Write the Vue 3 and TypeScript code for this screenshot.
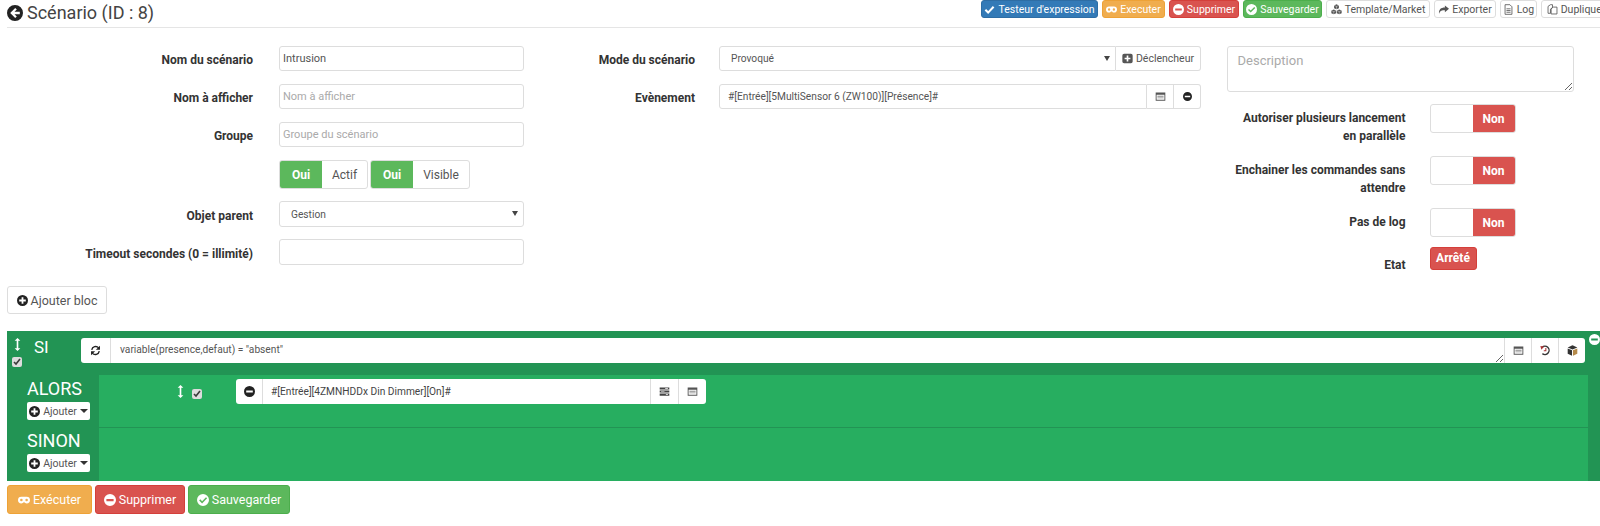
<script setup lang="ts">
interface TopButton { label: string; icon: string; kind: string; width: number }
const topButtons: TopButton[] = [
  { label: "Testeur d'expression", icon: 'check', kind: 'blue', width: 117 },
  { label: 'Executer', icon: 'gamepad', kind: 'orange', width: 63 },
  { label: 'Supprimer', icon: 'minus', kind: 'red', width: 70 },
  { label: 'Sauvegarder', icon: 'ok', kind: 'green', width: 79 },
  { label: 'Template/Market', icon: 'cubes', kind: 'plain', width: 104 },
  { label: 'Exporter', icon: 'share', kind: 'plain', width: 62 },
  { label: 'Log', icon: 'file', kind: 'plain', width: 37 },
  { label: 'Dupliquer', icon: 'copy', kind: 'plain', width: 70 },
]
const options = [
  { label: 'Autoriser plusieurs lancement en parallèle', cls: 'opt1' },
  { label: 'Enchainer les commandes sans attendre', cls: 'opt2' },
  { label: 'Pas de log', cls: 'opt3' },
]
const bottomButtons = [
  { label: 'Exécuter', icon: 'gamepad', kind: 'orange', width: 85 },
  { label: 'Supprimer', icon: 'minus', kind: 'red', width: 90 },
  { label: 'Sauvegarder', icon: 'ok', kind: 'green', width: 102 },
]
</script>

<template>
  <div class="page">
    <svg class="defs" aria-hidden="true">
      <symbol id="i-back" viewBox="0 0 16 16"><path fill="currentColor" fill-rule="evenodd" d="M8 0a8 8 0 1 1 0 16A8 8 0 0 1 8 0zM8.2 3 3.2 8l5 5 1.6-1.6-2.3-2.2h5.3V6.800H7.500l2.300-2.200z"/></symbol>
      <symbol id="i-check" viewBox="0 0 16 16"><path fill="none" stroke="currentColor" stroke-width="3" d="M2 8.500l4 4 8-8.500"/></symbol>
      <symbol id="i-gamepad" viewBox="0 0 16 16"><path fill="currentColor" fill-rule="evenodd" d="M4.500 3.500h7a4.500 4.500 0 0 1 0 9c-1.500 0-2.300-.8-3-1.500h-1c-.7.7-1.500 1.500-3 1.500a4.500 4.500 0 0 1 0-9zM4.500 6.300a1.700 1.700 0 1 0 0 3.400 1.700 1.700 0 0 0 0-3.400zM11.500 6.300a1.700 1.700 0 1 0 0 3.400 1.700 1.700 0 0 0 0-3.400z"/></symbol>
      <symbol id="i-minus" viewBox="0 0 16 16"><path fill="currentColor" fill-rule="evenodd" d="M8 0a8 8 0 1 1 0 16A8 8 0 0 1 8 0zM3.200 6.500v3h9.600v-3z"/></symbol>
      <symbol id="i-ok" viewBox="0 0 16 16"><path fill="currentColor" fill-rule="evenodd" d="M8 0a8 8 0 1 1 0 16A8 8 0 0 1 8 0zM12 4.300 6.800 9.500 4.400 7.100 2.900 8.600l3.900 3.900 6.700-6.700z"/></symbol>
      <symbol id="i-plus" viewBox="0 0 16 16"><path fill="currentColor" fill-rule="evenodd" d="M8 0a8 8 0 1 1 0 16A8 8 0 0 1 8 0zM6.700 3.200v3.500H3.200v2.600h3.500v3.500h2.600V9.300h3.500V6.700H9.300V3.200z"/></symbol>
      <symbol id="i-plus-sq" viewBox="0 0 16 16"><path fill="currentColor" fill-rule="evenodd" d="M3 1h10a2.500 2.500 0 0 1 2.500 2.500v9A2.500 2.500 0 0 1 13 15H3a2.500 2.500 0 0 1-2.500-2.500v-9A2.500 2.500 0 0 1 3 1zM6.800 3.800v3H3.800v2.400h3v3h2.400v-3h3V6.800h-3v-3z"/></symbol>
      <symbol id="i-cubes" viewBox="0 0 16 16"><path fill="currentColor" d="M8 0.500 11.500 2v4L8 7.500 4.500 6V2zM4 8l3.500 1.500v4L4 15 .5 13.500v-4zM12 8l3.500 1.500v4L12 15l-3.500-1.500v-4z"/><path fill="none" stroke="#fff" stroke-width=".6" d="M4.500 2 8 3.500 11.500 2M8 3.500V7.500M.5 9.500 4 11l3.500-1.500M4 11v4M8.500 9.500 12 11l3.500-1.500M12 11v4"/></symbol>
      <symbol id="i-share" viewBox="0 0 16 16"><path fill="currentColor" d="M10 2l6 5-6 5V9C6 9 3 9.500 1.500 14 1 8 4 5 10 5z"/></symbol>
      <symbol id="i-file" viewBox="0 0 16 16"><path fill="none" stroke="currentColor" stroke-width="1.200" d="M3 1h7l3 3v11H3zM5 7h6M5 9.500h6M5 12h6"/></symbol>
      <symbol id="i-copy" viewBox="0 0 16 16"><path fill="none" stroke="currentColor" stroke-width="1.200" d="M1.500 3.500 5 1h3v4L5 7.500v6H1.500zM6 7l3-2.500h5.500v10H6z"/></symbol>
      <symbol id="i-refresh" viewBox="0 0 16 16"><path fill="none" stroke="currentColor" stroke-width="2" d="M2.500 7A5.800 5.800 0 0 1 12.600 4.200M13.500 9A5.800 5.800 0 0 1 3.400 11.800"/><path fill="currentColor" d="M14.500 1v6h-6zM1.500 15V9h6z"/></symbol>
      <symbol id="i-list" viewBox="0 0 16 16"><path fill="#555" fill-rule="evenodd" d="M1 2h14v12H1zM2.300 5.500v7.200h11.400V5.500z"/><path fill="#888" d="M3.500 7h9v1.200h-9zM3.500 9.500h9v1.200h-9z"/></symbol>
      <symbol id="i-sliders" viewBox="0 0 16 16"><path fill="#444" d="M1 2h14v3H1zM1 6.500h14v3H1zM1 11h14v3H1z"/><path fill="#fff" d="M9 3h4v1H9zM3 7.500h5v1H3zM10 12h3v1h-3z"/></symbol>
      <symbol id="i-history" viewBox="0 0 16 16"><path fill="none" stroke="#333" stroke-width="2" d="M3 3.500A6 6 0 1 1 3.500 12.500"/><path fill="#a33" d="M0.500 1.500 6 2 2 7z"/><path fill="none" stroke="#a33" stroke-width="1.500" d="M8.500 4.500V8.500H5.500"/></symbol>
      <symbol id="i-cube" viewBox="0 0 16 16"><path fill="#333" d="M8 .5 15 3.500 8 6.500 1 3.500zM1 5l6.300 2.700V15.500L1 12.800z"/><path fill="#b58a4a" d="M15 5 8.700 7.700v7.800l6.300-2.700z"/></symbol>
      <symbol id="i-updown" viewBox="0 0 8 16"><path fill="currentColor" d="M4 0l3.500 3.500H5v9h2.500L4 16 .5 12.500H3v-9H.5z"/></symbol>
    </svg>

    <header class="head">
      <h1 class="title"><svg class="ico ico-title"><use href="#i-back" /></svg>Scénario (ID : 8)</h1>
      <div class="tools">
        <button v-for="b in topButtons" :key="b.label" class="btn" :class="b.kind" :style="{ width: b.width + 'px' }">
          <svg class="ico"><use :href="'#i-' + b.icon" /></svg>{{ b.label }}
        </button>
      </div>
    </header>

    <section class="form">
      <div class="col col-a">
        <div class="row"><label>Nom du scénario</label><input class="field tight" value="Intrusion" /></div>
        <div class="row"><label>Nom à afficher</label><input class="field tight" placeholder="Nom à afficher" /></div>
        <div class="row"><label>Groupe</label><input class="field tight" placeholder="Groupe du scénario" /></div>
        <div class="row row-toggles">
          <label></label>
          <div class="switch on"><span class="yes">Oui</span><span class="word w-actif">Actif</span></div>
          <div class="switch on"><span class="yes">Oui</span><span class="word w-visible">Visible</span></div>
        </div>
        <div class="row row-tall">
          <label>Objet parent</label>
          <div class="sel-wrap sel-full"><select class="field sel"><option>Gestion</option></select></div>
        </div>
        <div class="row row-tall"><label>Timeout secondes (0 = illimité)</label><input class="field tight" /></div>
      </div>

      <div class="col col-b">
        <div class="row">
          <label>Mode du scénario</label>
          <div class="group">
            <div class="sel-wrap sel-grow"><select class="field sel joined"><option>Provoqué</option></select></div>
            <span class="addon addon-text"><svg class="ico"><use href="#i-plus-sq" /></svg>Déclencheur</span>
          </div>
        </div>
        <div class="row">
          <label>Evènement</label>
          <div class="group">
            <input class="field joined event" value="#[Entrée][5MultiSensor 6 (ZW100)][Présence]#" />
            <span class="addon addon-icon"><svg class="ico"><use href="#i-list" /></svg></span>
            <span class="addon addon-icon"><svg class="ico ico-dark ico-sm"><use href="#i-minus" /></svg></span>
          </div>
        </div>
      </div>

      <div class="col col-c">
        <textarea class="desc" placeholder="Description"></textarea>
        <div v-for="o in options" :key="o.label" class="opt" :class="o.cls">
          <label>{{ o.label }}</label>
          <div class="switch off"><span class="blank"></span><span class="no">Non</span></div>
        </div>
        <div class="opt state">
          <label>Etat</label>
          <span class="badge">Arrêté</span>
        </div>
      </div>
    </section>

    <button class="add-block"><svg class="ico ico-dark"><use href="#i-plus" /></svg>Ajouter bloc</button>

    <section class="block">
      <div class="if-row">
        <div class="if-head">
          <div class="handles">
            <svg class="updown"><use href="#i-updown" /></svg>
            <input type="checkbox" class="mini" checked />
          </div>
          <span class="if-word">SI</span>
        </div>
        <div class="bar bar-if">
          <span class="cell cell-if"><svg class="ico ico-dark"><use href="#i-refresh" /></svg></span>
          <textarea class="expr" rows="1">variable(presence,defaut) = "absent"</textarea>
          <span class="cell"><svg class="ico"><use href="#i-list" /></svg></span>
          <span class="cell"><svg class="ico"><use href="#i-history" /></svg></span>
          <span class="cell"><svg class="ico"><use href="#i-cube" /></svg></span>
        </div>
        <svg class="collapse"><use href="#i-minus" /></svg>
      </div>

      <div class="branch branch-then">
        <div class="branch-head">
          <div class="branch-word">ALORS</div>
          <button class="add"><svg class="ico ico-dark"><use href="#i-plus" /></svg>Ajouter<span class="caret"></span></button>
        </div>
        <div class="branch-body">
          <div class="action">
            <svg class="updown"><use href="#i-updown" /></svg>
            <input type="checkbox" class="mini" checked />
            <div class="bar bar-action">
              <span class="cell cell-act"><svg class="ico ico-dark"><use href="#i-minus" /></svg></span>
              <input class="cmd" value="#[Entrée][4ZMNHDDx Din Dimmer][On]#" />
              <span class="cell"><svg class="ico"><use href="#i-sliders" /></svg></span>
              <span class="cell"><svg class="ico"><use href="#i-list" /></svg></span>
            </div>
          </div>
        </div>
      </div>

      <div class="branch branch-else">
        <div class="branch-head">
          <div class="branch-word">SINON</div>
          <button class="add"><svg class="ico ico-dark"><use href="#i-plus" /></svg>Ajouter<span class="caret"></span></button>
        </div>
        <div class="branch-body"></div>
      </div>
    </section>

    <footer class="foot">
      <button v-for="b in bottomButtons" :key="b.label" class="btn big" :class="b.kind" :style="{ width: b.width + 'px' }">
        <svg class="ico"><use :href="'#i-' + b.icon" /></svg>{{ b.label }}
      </button>
    </footer>
  </div>
</template>

<style>
html, body { margin: 0; background: #fff; overflow: hidden; }
</style>

<style scoped>
* { box-sizing: border-box; }
.page {
  width: 1600px;
  height: 526px;
  overflow: hidden;
  padding-left: 7px;
  font-family: Roboto, "Liberation Sans", sans-serif;
  font-size: 12px;
  color: #555;
}
.defs { position: absolute; width: 0; height: 0; }
.ico { width: 11px; height: 11px; margin-right: 3px; flex: none; vertical-align: -1px; }
.ico-dark { color: #222; }
.ico-sm { width: 9px; height: 9px; }

.head {
  display: flex;
  height: 28px;
  border-bottom: 1px solid #e5e5e5;
  align-items: flex-start;
}
.title {
  flex: 0 0 974px;
  margin: 2px 0 0;
  display: flex;
  align-items: center;
  font-size: 18px;
  line-height: 21px;
  font-weight: 400;
  color: #444;
}
.ico-title { width: 16px; height: 16px; margin-right: 4px; color: #222; }
.tools { display: flex; gap: 4px; flex: none; }
.btn {
  display: flex;
  align-items: center;
  justify-content: center;
  height: 18px;
  padding: 0;
  border: 1px solid #ddd;
  border-radius: 3px;
  font: 10.500px Roboto, sans-serif;
  background: #fff;
  color: #555;
  white-space: nowrap;
}
.blue { background: #337ab7; border-color: #2e6da4; color: #fff; }
.orange { background: #f0ad4e; border-color: #eea236; color: #fff; }
.red { background: #d9534f; border-color: #d43f3a; color: #fff; }
.green { background: #5cb85c; border-color: #4cae4c; color: #fff; }

.form {
  display: grid;
  grid-template-columns: 517px 702.500px 347px;
  margin-top: 18px;
  height: 240px;
}
.col { min-width: 0; }
.row { display: flex; align-items: center; height: 25px; margin-bottom: 13px; }
.row label {
  flex: none;
  padding-top: 3px;
  text-align: right;
  font-weight: 700;
  color: #333;
  font-size: 12px;
}
.col-a .row label { width: 246px; margin-right: 26px; }
.col-b .row label { width: 171px; margin-right: 24px; }
.row-toggles { height: 29px; margin-bottom: 12px; gap: 2px; }
.row-toggles label { margin-right: 24px !important; }
.row-tall { height: 26px; margin-bottom: 12px; }
.field {
  height: 100%;
  width: 245px;
  border: 1px solid #ddd;
  border-radius: 3px;
  background: #fff;
  font: 11px Roboto, sans-serif;
  color: #555;
  padding: 0 8px;
  outline: none;
}
.field.tight { padding: 0 3px; }
.field::placeholder, .desc::placeholder { color: #aaa; opacity: 1; }
.field.event { font-size: 10.200px; }
.field.sel {
  appearance: none;
  padding: 0 11px;
  font-size: 10.200px;
  width: 100%;
}
.sel-wrap { position: relative; height: 100%; }
.sel-wrap::after {
  content: "";
  position: absolute;
  right: 6px;
  top: 10px;
  border-top: 5px solid #444;
  border-left: 3px solid transparent;
  border-right: 3px solid transparent;
  pointer-events: none;
}
.sel-full { width: 245px; }
.sel-grow { flex: 1; min-width: 0; }
.group { display: flex; height: 100%; width: 482px; }
.field.joined { border-radius: 3px 0 0 3px; }
input.field.joined { flex: 1; width: auto; min-width: 0; }
.addon {
  display: flex;
  align-items: center;
  justify-content: center;
  height: 100%;
  border: 1px solid #ddd;
  border-left: 0;
  background: #fff;
  color: #555;
}
.addon:last-child { border-radius: 0 3px 3px 0; }
.addon-text { width: 85px; font-size: 10.500px; }
.addon-icon { width: 27px; }
.addon-icon .ico { margin: 0; }

.switch {
  display: flex;
  height: 100%;
  border: 1px solid #ddd;
  border-radius: 3px;
  overflow: hidden;
  background: #fff;
  font-size: 12px;
}
.switch span { display: flex; align-items: center; justify-content: center; }
.yes { width: 42px; background: #5cb85c; color: #fff; font-weight: 700; }
.word { color: #555; }
.w-actif { width: 45px; }
.w-visible { width: 56px; }
.blank { width: 42px; }
.no { width: 42px; background: #d9534f; color: #fff; font-weight: 700; }

.desc {
  display: block;
  width: 347px;
  height: 46px;
  border: 1px solid #ddd;
  border-radius: 3px;
  padding: 6px 10px;
  font: 13px Roboto, sans-serif;
  color: #555;
  outline: none;
}
.opt { display: flex; align-items: flex-start; height: 29px; }
.opt label {
  flex: none;
  width: 175px;
  margin-left: 4px;
  margin-right: 24px;
  padding-top: 6px;
  text-align: right;
  font-weight: 700;
  color: #333;
  font-size: 12px;
  line-height: 17.500px;
}
.opt .switch { width: 86px; }
.opt1 { margin-top: 12px; }
.opt2 { margin-top: 23px; }
.opt3 { margin-top: 23px; }
.state { margin-top: 10px; height: 23px; }
.state label { padding-top: 10px; }
.badge {
  width: 47px;
  height: 23px;
  line-height: 21px;
  text-align: center;
  background: #d9534f;
  border: 1px solid #d43f3a;
  border-radius: 3px;
  color: #fff;
  font-weight: 700;
}

.add-block {
  display: flex;
  align-items: center;
  justify-content: center;
  width: 100px;
  height: 28px;
  background: #fff;
  border: 1px solid #ddd;
  border-radius: 3px;
  font: 12.500px Roboto, sans-serif;
  color: #555;
  padding: 0;
}

.block {
  margin-top: 17px;
  width: 1593px;
  height: 150px;
  background: #229454;
  color: #fff;
}
.if-row { position: relative; display: flex; height: 44px; padding-top: 6px; }
.if-head { display: flex; width: 74px; flex: none; }
.handles { display: flex; flex-direction: column; align-items: center; width: 20px; padding-top: 1px; }
.updown { width: 7px; height: 13px; color: #fff; flex: none; }
.mini { width: 10px; height: 10px; margin: 6px 0 0; accent-color: #ddd; }
.if-word { font-size: 17px; margin-left: 7px; line-height: 20px; }
.bar { display: flex; height: 25px; background: #fff; border-radius: 3px; color: #555; }
.bar-if { width: 1504px; margin-top: 1px; }
.cell {
  flex: none;
  width: 27px;
  display: flex;
  align-items: center;
  justify-content: center;
  border-left: 1px solid #ddd;
}
.cell:first-child { border-left: 0; }
.cell .ico { margin: 0; }
.cell-if { width: 29px; }
.cell-act { width: 26px; }
.expr {
  flex: 1;
  min-width: 0;
  height: 25px;
  border: 0;
  border-left: 1px solid #ddd;
  padding: 5px 9px;
  font: 10.200px Roboto, sans-serif;
  color: #555;
  outline: none;
  line-height: 14px;
}
.collapse { position: absolute; right: 0; top: 3px; width: 11px; height: 11px; color: #fff; }

.branch { display: flex; height: 53px; }
.branch-head { width: 92px; padding-left: 20px; flex: none; }
.branch-word { font-size: 18px; line-height: 26px; }
.branch-then .branch-head { padding-top: 1px; }
.branch-body { width: 1489px; background: #27ae60; flex: none; }
.branch-then .branch-body { border-bottom: 1px solid #229454; }
.add {
  display: flex;
  align-items: center;
  justify-content: center;
  width: 63px;
  height: 18px;
  padding: 0;
  border: 0;
  border-radius: 2px;
  background: #fff;
  font: 10.500px Roboto, sans-serif;
  color: #555;
}
.caret {
  margin-left: 3px;
  border-top: 4px solid #333;
  border-left: 4px solid transparent;
  border-right: 4px solid transparent;
}
.action { display: flex; align-items: center; height: 25px; margin-top: 4px; padding-left: 78px; }
.action .mini { margin: 5px 0 0 8px; }
.bar-action { width: 470px; margin-left: 34px; margin-top: 0; }
.cmd {
  flex: 1;
  min-width: 0;
  border: 0;
  border-left: 1px solid #ddd;
  padding: 0 8px;
  font: 10.200px Roboto, sans-serif;
  color: #444;
  outline: none;
}
.bar-action .cell { width: 28px; }
.bar-action .cell-act { width: 26px; }

.foot { display: flex; gap: 3px; margin-top: 4px; }
.btn.big { height: 29px; font-size: 12.500px; }
.btn.big .ico { width: 12px; height: 12px; }
</style>
